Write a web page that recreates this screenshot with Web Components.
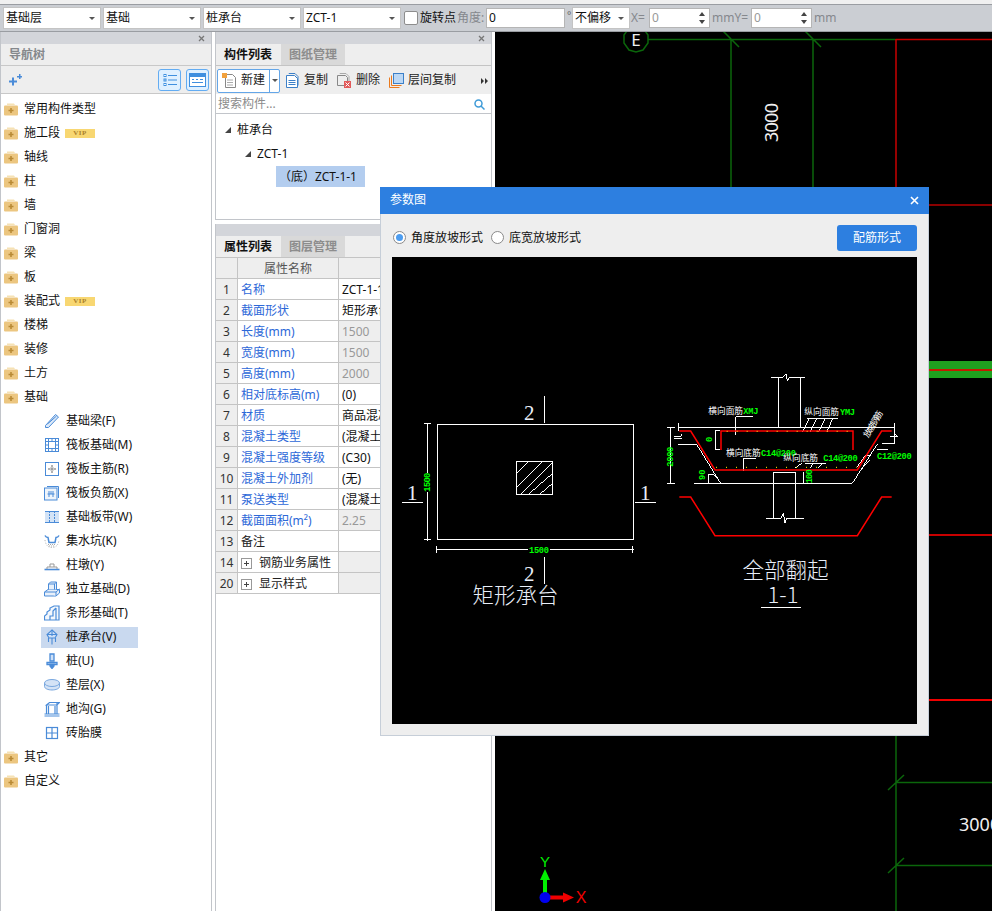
<!DOCTYPE html>
<html lang="zh">
<head>
<meta charset="utf-8">
<title>参数图</title>
<style>
html, body { margin: 0; height: 100%; overflow: hidden; background: #fff; }
body { font: 12px/1.2 "Noto Sans", "Noto Sans CJK SC", sans-serif; color: #111; display: flex; flex-direction: column; }
</style>
</head>
<body>
<top-bar>
  <tool-combo>基础层</tool-combo><tool-combo>基础</tool-combo><tool-combo>桩承台</tool-combo><tool-combo>ZCT-1</tool-combo>
</top-bar>
<work-area>
  <nav-panel>
    <tree-row icon="folder">常用构件类型</tree-row>
    <tree-row icon="folder" vip>施工段</tree-row>
    <tree-row icon="folder">轴线</tree-row>
    <tree-row icon="folder">柱</tree-row>
    <tree-row icon="folder">墙</tree-row>
    <tree-row icon="folder">门窗洞</tree-row>
    <tree-row icon="folder">梁</tree-row>
    <tree-row icon="folder">板</tree-row>
    <tree-row icon="folder" vip>装配式</tree-row>
    <tree-row icon="folder">楼梯</tree-row>
    <tree-row icon="folder">装修</tree-row>
    <tree-row icon="folder">土方</tree-row>
    <tree-row icon="folder">基础</tree-row>
    <tree-row child icon="beam">基础梁(F)</tree-row>
    <tree-row child icon="raft">筏板基础(M)</tree-row>
    <tree-row child icon="rebar">筏板主筋(R)</tree-row>
    <tree-row child icon="negbar">筏板负筋(X)</tree-row>
    <tree-row child icon="strip">基础板带(W)</tree-row>
    <tree-row child icon="pit">集水坑(K)</tree-row>
    <tree-row child icon="pier">柱墩(Y)</tree-row>
    <tree-row child icon="footing">独立基础(D)</tree-row>
    <tree-row child icon="stepped">条形基础(T)</tree-row>
    <tree-row child icon="cap" selected>桩承台(V)</tree-row>
    <tree-row child icon="pile">桩(U)</tree-row>
    <tree-row child icon="disc">垫层(X)</tree-row>
    <tree-row child icon="trench">地沟(G)</tree-row>
    <tree-row child icon="brick">砖胎膜</tree-row>
    <tree-row icon="folder">其它</tree-row>
    <tree-row icon="folder">自定义</tree-row>
  </nav-panel>
  <middle-panel>
    <prop-row n="1" name="名称" value="ZCT-1-1"></prop-row>
    <prop-row n="2" name="截面形状" value="矩形承台"></prop-row>
    <prop-row n="3" name="长度(mm)" value="1500" locked></prop-row>
    <prop-row n="4" name="宽度(mm)" value="1500" locked></prop-row>
    <prop-row n="5" name="高度(mm)" value="2000" locked></prop-row>
    <prop-row n="6" name="相对底标高(m)" value="(0)"></prop-row>
    <prop-row n="7" name="材质" value="商品混凝土"></prop-row>
    <prop-row n="8" name="混凝土类型" value="(混凝土)"></prop-row>
    <prop-row n="9" name="混凝土强度等级" value="(C30)"></prop-row>
    <prop-row n="10" name="混凝土外加剂" value="(无)"></prop-row>
    <prop-row n="11" name="泵送类型" value="(混凝土泵)"></prop-row>
    <prop-row n="12" name="截面面积(m²)" value="2.25" locked></prop-row>
    <prop-row n="13" name="备注" value="" plain></prop-row>
    <prop-row n="14" name="钢筋业务属性" value="" plain group></prop-row>
    <prop-row n="20" name="显示样式" value="" plain group></prop-row>
  </middle-panel>
  <cad-canvas></cad-canvas>
</work-area>
<param-dialog></param-dialog>

<script>
const BLUE = '#4a8bd8';

// 树上和工具栏的小图标
const ICONS = {
  folder: `<svg width="14" height="14" viewBox="0 0 14 14"><path d="M3 1.5h7l1 1.5H3z" fill="#f6e2b4"/><path d="M0 4.5q0-1 1-1h12q1 0 1 1v8q0 1-1 1H1q-1 0-1-1z" fill="#ecc680"/><path d="M7 6v5M4.5 8.5h5" stroke="#b98a35" stroke-width="1.6"/></svg>`,
  beam: `<svg width="16" height="16" viewBox="0 0 16 16" fill="#dce9f8" stroke="${BLUE}"><path d="M1.5 12.5 11.5 1.5 14.5 4 4.5 14.5H1.5z"/><path d="M3.5 11 12.5 3" fill="none"/></svg>`,
  raft: `<svg width="16" height="16" viewBox="0 0 16 16" fill="none" stroke="${BLUE}"><rect x="1.5" y="1.5" width="13" height="13"/><rect x="4.5" y="4.5" width="7" height="7"/><path d="M1.5 4.5h3M11.5 4.5h3M1.5 11.5h3M11.5 11.5h3M4.5 1.5v3M11.5 1.5v3M4.5 11.5v3M11.5 11.5v3M1.5 8h3M11.5 8h3M8 1.5v3M8 11.5v3"/></svg>`,
  rebar: `<svg width="16" height="16" viewBox="0 0 16 16" fill="none"><rect x="1.5" y="1.5" width="13" height="13" stroke="${BLUE}"/><path d="M8 4v8M4 8h8" stroke="#999" stroke-width="1.5"/><path d="M6.5 6.5h3v3h-3z" stroke="#ccc"/></svg>`,
  negbar: `<svg width="16" height="16" viewBox="0 0 16 16" fill="none" stroke="${BLUE}"><path d="M3 1.5h11.5V13"/><rect x="0.5" y="3" width="12.5" height="12" fill="#eef4fb"/><path d="M5 6v6M9 6v6M3.5 9h7M7 6v3" stroke-width="1"/></svg>`,
  strip: `<svg width="16" height="16" viewBox="0 0 16 16" fill="#d3e3f6"><rect x="1" y="2" width="14" height="12"/><path d="M1 2.5h14M1 13.5h14" stroke="${BLUE}"/><path d="M5.5 2v12M10.5 2v12" stroke="${BLUE}" stroke-dasharray="2 1"/></svg>`,
  pit: `<svg width="16" height="16" viewBox="0 0 16 16" fill="none"><path d="M1 2.500q1 2 3 2l1 5h6l1-5q2 0 3-2" stroke="${BLUE}" stroke-width="1.500"/><path d="M1 7q1 7.500 7 7.500T15 7" stroke="#aaa" stroke-dasharray="1 1.500"/><path d="M4 11.500h8M5 13h6" stroke="#aaa" stroke-dasharray="1 1"/></svg>`,
  pier: `<svg width="16" height="16" viewBox="0 0 16 16" fill="none" stroke="${BLUE}"><path d="M.5 12.5h15" stroke-width="1.6"/><path d="M3 12V10h10v2" stroke="#999"/><path d="M6 10V7h4v3" stroke="#999"/></svg>`,
  footing: `<svg width="16" height="16" viewBox="0 0 16 16" fill="#e8f0fa" stroke="${BLUE}"><path d="M.5 11 4 8.500h11.500v3.500L12 15H.5z"/><path d="M.5 11H12v4M12 11l3.500-3"/><path d="M4.500 8.500V3l2-2h6v7.500M4.500 3h6v5.500M10.500 3l2-2"/></svg>`,
  stepped: `<svg width="16" height="16" viewBox="0 0 16 16" fill="#f3f7fc" stroke="${BLUE}" stroke-width="1.200"><path d="M.500 15V11L3 9V7L6 5V3l4-2h5v14z"/><path d="M6 15V11h3V6l3-3M12 3v12"/></svg>`,
  cap: `<svg width="16" height="16" viewBox="0 0 16 16" fill="#cfe0f6" stroke="${BLUE}" stroke-width="1.100"><path d="M8 1 13 5.500 11 9H5L3 5.500z"/><path d="M3 5.500h10M8 1v6" /><path d="M4.500 9v4M8 9v6.500M11.500 9v4" fill="none"/></svg>`,
  pile: `<svg width="16" height="16" viewBox="0 0 16 16" fill="#cfe0f6" stroke="${BLUE}" stroke-width="1.300"><path d="M6 1h4v7H6z"/><path d="M3 9.500h10v2H3z"/><path d="M6 11.500h4V13l-2 2.500L6 13z" fill="${BLUE}"/></svg>`,
  disc: `<svg width="16" height="16" viewBox="0 0 16 16" fill="#d4e3f6" stroke="#7aa8df"><path d="M.500 6v3.500C.500 11.500 4 13 8 13s7.500-1.500 7.500-3.500V6"/><ellipse cx="8" cy="6" rx="7.500" ry="3.500"/></svg>`,
  trench: `<svg width="16" height="16" viewBox="0 0 16 16" fill="none" stroke="${BLUE}" stroke-width="1.200"><path d="M.500 15h15M.500 13h15"/><path d="M2.500 13V4M13 13V2M2.500 4l3-2.500H15.500L13 4zM2.500 4H13M4.500 13V5M11 13V5"/></svg>`,
  brick: `<svg width="16" height="16" viewBox="0 0 16 16" fill="none" stroke="${BLUE}" stroke-width="1.200"><rect x="2.500" y="2.500" width="11" height="11"/><path d="M8 2.500v11M2.500 8h11"/></svg>`
};

class TopBar extends HTMLElement {
  constructor() {
    super();
    this.attachShadow({ mode: 'open' }).innerHTML = `
      <style>
        :host { display: block; flex: none; background: #f0f0f0; padding-top: 4px; }
        .bar { display: flex; align-items: center; gap: 2px; padding-left: 3px;
               background: #cbced3; border-top: 1px solid #9a9da2; border-bottom: 1px solid #9a9da2; height: 26px; }
        .check { width: 12px; height: 12px; border: 1px solid #8d8d8d; border-radius: 2px; background: #fff; margin-left: 1px; }
        .label { white-space: nowrap; }
        .dim { color: #85888d; white-space: nowrap; }
        .input { height: 20px; box-sizing: border-box; background: #fff; border: 1px solid #b5b5b5; display: flex; align-items: center; padding-left: 2px; }
        .deg { color: #666; font-size: 10px; width: 1px; margin-top: -6px; margin-right: 2px; }
        .spin { position: relative; color: #999; width: 61px; }
        .spin::before, .spin::after { content: ""; position: absolute; right: 4px; border: 3px solid transparent; border-top: 0; border-bottom: 4px solid #444; }
        .spin::before { top: 3px; }
        .spin::after { bottom: 3px; transform: scaleY(-1); }
      </style>
      <div class="bar">
        <slot></slot>
        <span class="check"></span>
        <span class="label">旋转点</span>
        <span class="dim" style="margin-left:-1px;width:27px">角度:</span>
        <span class="input" style="width:79px">0</span>
        <span class="deg">°</span>
        <tool-combo style="width:58px">不偏移</tool-combo>
        <span class="dim" style="margin-left:-1px;width:16px">X=</span>
        <span class="input spin">0</span>
        <span class="dim" style="width:36px">mmY=</span>
        <span class="input spin" style="margin-left:1px">0</span>
        <span class="dim">mm</span>
      </div>`;
  }
}

class ToolCombo extends HTMLElement {
  constructor() {
    super();
    this.attachShadow({ mode: 'open' }).innerHTML = `
      <style>
        :host { display: block; width: 98px; height: 22px; box-sizing: border-box; flex: none; background: #fff; border: 1px solid #c4c4c4; }
        div { display: flex; align-items: center; justify-content: space-between; height: 100%; padding: 0 5px 0 2px; color: #111; }
        i { border: 3px solid transparent; border-top: 3px solid #555; border-bottom: 0; }
      </style>
      <div><slot></slot><i></i></div>`;
  }
}

class WorkArea extends HTMLElement {
  constructor() {
    super();
    this.attachShadow({ mode: 'open' }).innerHTML = `
      <style>
        :host { display: flex; flex: 1; min-height: 0; background: #fff; gap: 3px; }
      </style>
      <slot></slot>`;
  }
}

// 面板顶部的灰条,带关闭叉
class PanelStrip extends HTMLElement {
  constructor() {
    super();
    this.attachShadow({ mode: 'open' }).innerHTML = `
      <style>
        :host { display: flex; justify-content: flex-end; align-items: center; height: 12px; background: #d3d5da; padding-right: 6px; flex: none; }
      </style>
      <svg width="7" height="7" viewBox="0 0 7 7"><path d="M1 1l5 5M6 1 1 6" stroke="#777" stroke-width="1.300"/></svg>`;
  }
}

class NavPanel extends HTMLElement {
  constructor() {
    super();
    this.attachShadow({ mode: 'open' }).innerHTML = `
      <style>
        :host { display: flex; flex-direction: column; width: 212px; flex: none; box-sizing: border-box; border-left: 1px solid #c2c5ca; border-right: 1px solid #c2c5ca; }
        .title { height: 22px; padding: 2px 0 0 8px; display: flex; align-items: center; background: #eee; color: #85888c; font-weight: 700; border-bottom: 1px solid #c8c8c8; box-sizing: border-box; flex: none; }
        .tools { height: 28px; background: #eee; border-bottom: 1px solid #c8c8c8; box-sizing: border-box; display: flex; align-items: center; padding: 0 2px 0 7px; gap: 5px; flex: none; }
        .tools svg.plus { margin-right: auto; }
        .btn { width: 23px; height: 22px; box-sizing: border-box; border: 1px solid #63acf2; border-radius: 3px; background: #dff0ff; display: flex; align-items: center; justify-content: center; }
        .rows { padding-top: 3px; flex: 1; }
      </style>
      <panel-strip></panel-strip>
      <div class="title">导航树</div>
      <div class="tools">
        <svg class="plus" width="14" height="12" viewBox="0 0 14 12" fill="${BLUE}"><path d="M1 6.500h3v-3h2v3h3v2H6v3H4v-3H1z"/><path d="M9 2h2V0h1.500v2H14v1.500h-1.500V5H11V3.500H9z"/></svg>
        <span class="btn"><svg width="14" height="14" viewBox="0 0 14 14" fill="none" stroke="#3f8fdf"><rect x="1" y="1.500" width="2" height="2"/><rect x="1" y="6" width="2" height="2"/><rect x="1" y="10.500" width="2" height="2"/><path d="M5 2.500h9M5 7h9M5 11.500h9"/></svg></span>
        <span class="btn"><svg width="17" height="14" viewBox="0 0 17 14"><rect x=".5" y=".5" width="16" height="13" fill="#fff" stroke="#3f8fdf"/><rect x="1" y="1" width="15" height="3" fill="#3f8fdf"/><path d="M3 6.500h2M7 6.500h2M11 6.500h3M3 9.500h11" stroke="#3f8fdf"/></svg></span>
      </div>
      <div class="rows"><slot></slot></div>`;
  }
}

class TreeRow extends HTMLElement {
  connectedCallback() {
    const child = this.hasAttribute('child');
    const selected = this.hasAttribute('selected');
    this.attachShadow({ mode: 'open' }).innerHTML = `
      <style>
        :host { display: block; height: 24px; }
        .row { display: flex; align-items: center; height: 100%; gap: 6px; padding-left: ${child ? 43 : 3}px; }
        .cell { display: flex; align-items: center; gap: 6px; height: 21px; width: 97px; padding-left: 3px; margin-left: -3px; box-sizing: border-box; white-space: nowrap; flex: none; ${selected ? 'background: #c9d9ef;' : ''} }
        .ic { display: flex; }
        .vip { margin-left: -1px; width: 30px; height: 9px; background: #f8d772; color: #a9802a; font: bold 7px/9px "Liberation Serif", serif; text-align: center; letter-spacing: .5px; }
      </style>
      <div class="row">
        ${child ? `<div class="cell"><span class="ic">${ICONS[this.getAttribute('icon')]}</span><span><slot></slot></span></div>`
                : `<span class="ic">${ICONS[this.getAttribute('icon')]}</span><span><slot></slot></span>`}
        ${this.hasAttribute('vip') ? '<span class="vip">VIP</span>' : ''}
      </div>`;
  }
}

class PanelTabs extends HTMLElement {
  connectedCallback() {
    const names = this.getAttribute('names').split(',');
    this.attachShadow({ mode: 'open' }).innerHTML = `
      <style>
        :host { display: flex; flex: none; height: 22px; background: #eee; border-bottom: 1px solid #c4c4c4; box-sizing: border-box; }
        span { width: 64px; margin-right: 1px; padding-top: 2px; box-sizing: border-box; display: flex; align-items: center; justify-content: center; font-weight: 700; }
        .off { background: #d9d9d9; color: #8d8d8d; }
      </style>
      ${names.map((n, i) => `<span class="${i ? 'off' : ''}">${n}</span>`).join('')}`;
  }
}

class MiddlePanel extends HTMLElement {
  constructor() {
    super();
    this.attachShadow({ mode: 'open' }).innerHTML = `
      <style>
        :host { display: flex; flex-direction: column; width: 277px; flex: none; box-sizing: border-box; }
        .top, .bottom { border-left: 1px solid #c2c5ca; border-right: 1px solid #c2c5ca; display: flex; flex-direction: column; }
        .top { height: 188px; border-bottom: 1px solid #c2c5ca; box-sizing: border-box; }
        .bottom { flex: 1; margin-top: 4px; }
        .tools { height: 28px; box-sizing: border-box; background: #eee; display: flex; align-items: center; padding: 1px 0 0 1px; flex: none; color: #222; }
        .new { display: flex; height: 24px; box-sizing: border-box; border: 1px solid #64a6e8; border-radius: 2px; background: #fff; align-items: center; margin-right: 6px; }
        .new b { font-weight: 400; display: flex; align-items: center; gap: 5px; padding-left: 4px; width: 52px; box-sizing: border-box; border-right: 1px solid #64a6e8; height: 100%; white-space: nowrap; }
        .new i { width: 9px; display: flex; justify-content: center; }
        .new i::after { content: ""; border: 3px solid transparent; border-top: 3px solid #555; border-bottom: 0; }
        .tool { display: flex; align-items: center; gap: 4px; margin-right: 9px; white-space: nowrap; }
        .more { margin-left: 16px; display: flex; }
        .search { height: 20px; box-sizing: border-box; display: flex; align-items: center; justify-content: space-between; padding: 2px 6px 0 2px; color: #8b8b8b; background: #fff; border-bottom: 1px solid #c2c5ca; flex: none; }
        .tree { flex: 1; padding-top: 4px; }
        .node { height: 24px; display: flex; align-items: center; gap: 6px; white-space: nowrap; }
        .arrow { width: 0; height: 0; border-left: 6px solid transparent; border-bottom: 6px solid #444; }
        .pick { height: 21px; width: 89px; margin-left: 60px; display: flex; align-items: center; background: #b3cdef; white-space: nowrap; padding: 2px 0 0 3px; box-sizing: border-box; }
        .head { display: grid; grid-template-columns: 22px 101px 1fr; height: 21px; background: #eee; flex: none; }
        .head span { border-right: 1px solid #c4c4c4; border-bottom: 1px solid #c4c4c4; padding-top: 2px; display: flex; align-items: center; justify-content: center; color: #555; }
      </style>
      <div class="top">
        <panel-strip></panel-strip>
        <panel-tabs names="构件列表,图纸管理"></panel-tabs>
        <div class="tools">
          <span class="new"><b>
            <svg width="14" height="15" viewBox="0 0 14 15" fill="none"><path d="M3.500 1.500h7l3 3v10h-10z" stroke="#888"/><path d="M5 7h6M5 9.500h6M5 12h6" stroke="#aaa"/><rect x="0" y="0" width="5" height="5" fill="#f2a13c"/></svg>新建</b><i></i></span>
          <span class="tool"><svg width="14" height="15" viewBox="0 0 14 15" fill="none" stroke="#3c80c8"><path d="M.500 2.500h8l3 3v9h-11z" fill="#fff"/><path d="M3 1v-.500h6l3 3v9"/><path d="M2.500 7.500h7M2.500 9.500h7M2.500 11.500h7"/></svg>复制</span>
          <span class="tool"><svg width="15" height="15" viewBox="0 0 15 15" fill="none"><path d="M.500 2.500h8l2 2v8h-10z" stroke="#888"/><path d="M3 1V.500h6l3 3V8" stroke="#aaa"/><rect x="7" y="8" width="7" height="7" fill="#e25a5a"/><path d="M8.500 9.500l4 4M12.500 9.500l-4 4" stroke="#fff"/></svg>删除</span>
          <span class="tool"><svg width="15" height="15" viewBox="0 0 15 15" fill="none"><path d="M.500 14.500v-10M.500 14.500h10M2.500 12.500v-10M2.500 12.500h10" stroke="#ea7a1e"/><rect x="4.500" y=".500" width="10" height="10" fill="#bcd8f5" stroke="#3c80c8"/></svg>层间复制</span>
          <span class="more"><svg width="7" height="6" viewBox="0 0 7 6" fill="#333"><path d="M0 0l3 3-3 3zM4 0l3 3-3 3z"/></svg></span>
        </div>
        <div class="search">搜索构件...
          <svg width="11" height="11" viewBox="0 0 11 11" fill="none" stroke="#3f9bd8" stroke-width="1.500"><circle cx="4.500" cy="4.500" r="3.500"/><path d="M7 7l3.500 3.500"/></svg>
        </div>
        <div class="tree">
          <div class="node" style="padding-left:9px"><span class="arrow"></span>桩承台</div>
          <div class="node" style="padding-left:29px"><span class="arrow"></span>ZCT-1</div>
          <div class="pick">（底）ZCT-1-1</div>
        </div>
      </div>
      <div class="bottom">
        <panel-strip></panel-strip>
        <panel-tabs names="属性列表,图层管理"></panel-tabs>
        <div class="head"><span></span><span>属性名称</span><span>属性值</span></div>
        <slot></slot>
      </div>`;
  }
}

class PropRow extends HTMLElement {
  connectedCallback() {
    const locked = this.hasAttribute('locked');
    const plain = this.hasAttribute('plain');
    const group = this.hasAttribute('group');
    this.attachShadow({ mode: 'open' }).innerHTML = `
      <style>
        :host { display: grid; grid-template-columns: 22px 101px 1fr; height: 21px; }
        span { border-right: 1px solid #c4c4c4; border-bottom: 1px solid #c4c4c4; display: flex; align-items: center; white-space: nowrap; overflow: hidden; padding: 2px 0 0 3px; box-sizing: border-box; }
        .n { background: #eee; justify-content: center; padding: 2px 0 0; color: #333; }
        .name { color: ${plain ? '#222' : '#2d68d8'}; gap: 7px; }
        .val { background: ${locked || group ? '#eee' : '#fff'}; color: ${locked ? '#999' : '#111'}; }
        i { width: 9px; height: 9px; border: 1px solid #999; flex: none; position: relative; background: #fff; }
        i::before { content: ""; position: absolute; left: 2px; right: 2px; top: 4px; height: 1px; background: #444; }
        i::after { content: ""; position: absolute; top: 2px; bottom: 2px; left: 4px; width: 1px; background: #444; }
      </style>
      <span class="n">${this.getAttribute('n')}</span>
      <span class="name">${group ? '<i></i>' : ''}${this.getAttribute('name')}</span>
      <span class="val">${this.getAttribute('value')}</span>`;
  }
}

// 绘图区:轴网本身就是自由画布,按坐标画
class CadCanvas extends HTMLElement {
  constructor() {
    super();
    this.attachShadow({ mode: 'open' }).innerHTML = `
      <style>
        :host { display: block; flex: 1; background: #000; position: relative; overflow: hidden; }
        svg { position: absolute; left: 0; top: 0; display: block; }
        text { font-family: "Noto Sans", sans-serif; fill: #f0f0f0; }
      </style>
      <svg width="497" height="879" viewBox="495 32 497 879" fill="none">
        <g stroke="#0b660b" stroke-width="1.500">
          <polygon points="629,28 643,28 648,35 648,43 643,50 636,52 629,50 624,43 624,35"/>
          <path d="M648 39.500H896M731 39V187M813 39V187M723 31l16 16M805 31l16 16"/>
          <path d="M896 736V911M896 782.500H992M896 865.500H992M888 790l16-15M888 873l16-15"/>
        </g>
        <path d="M896 39.500H992M896 39V187" stroke="#c80000" stroke-width="1.500"/>
        <path d="M929 205H992" stroke="#8a0000" stroke-width="2"/>
        <rect x="929" y="361" width="63" height="17" fill="#1fa01f"/>
        <path d="M929 370H992" stroke="#c41a00" stroke-width="2"/>
        <path d="M929 535H992" stroke="#c80000" stroke-width="2"/>
        <path d="M929 700H992" stroke="#f00000" stroke-width="2"/>
        <text x="636" y="46" font-size="17" text-anchor="middle">E</text>
        <text transform="translate(778 142) rotate(-90)" font-size="18" textLength="39">3000</text>
        <text x="959" y="831" font-size="18">3000</text>
        <path d="M545 896V880" stroke="#00f000" stroke-width="4"/>
        <path d="M545 869l5 11h-10z" fill="#00f000"/>
        <path d="M548 897.500H563" stroke="#f00000" stroke-width="4"/>
        <path d="M574 897.500l-11-5v10z" fill="#f00000"/>
        <circle cx="545" cy="897.500" r="5.500" fill="#0000f0"/>
        <text x="545" y="867" font-size="15" text-anchor="middle" style="fill:#00f000;font-family:'Liberation Sans',sans-serif">Y</text>
        <text x="581" y="903" font-size="16" text-anchor="middle" style="fill:#f00000;font-family:'Liberation Sans',sans-serif">X</text>
      </svg>`;
  }
}

class RadioOption extends HTMLElement {
  constructor() {
    super();
    this.attachShadow({ mode: 'open' }).innerHTML = `
      <style>
        :host { display: inline-flex; align-items: center; gap: 5px; }
        i { width: 13px; height: 13px; box-sizing: border-box; border: 1px solid #8a8a8a; border-radius: 50%; background: #fff; display: flex; align-items: center; justify-content: center; }
        :host([checked]) i::after { content: ""; width: 7px; height: 7px; border-radius: 50%; background: #4d9df0; }
      </style>
      <i></i><slot></slot>`;
  }
}

class ParamDialog extends HTMLElement {
  constructor() {
    super();
    this.attachShadow({ mode: 'open' }).innerHTML = `
      <style>
        :host { position: absolute; left: 380px; top: 187px; width: 549px; height: 549px; box-sizing: border-box; display: flex; flex-direction: column; background: #eee; border: 1px solid #c6ced8; border-top: 0; }
        .title { height: 27px; margin: 0 -1px; background: #2d7fe0; color: #fff; display: flex; align-items: center; justify-content: space-between; padding: 0 10px; flex: none; }
        .body { flex: 1; display: flex; flex-direction: column; padding: 11px 11px 11px; min-height: 0; }
        .opts { display: flex; align-items: center; height: 26px; gap: 8px; flex: none; padding-left: 1px; }
        .btn { margin-left: auto; width: 80px; height: 26px; background: #2d7fe0; border-radius: 3px; color: #fff; display: flex; align-items: center; justify-content: center; }
        pile-drawing { margin-top: 6px; flex: 1; }
      </style>
      <div class="title">参数图
        <svg width="9" height="9" viewBox="0 0 9 9"><path d="M1 1l7 7M8 1 1 8" stroke="#fff" stroke-width="1.600"/></svg>
      </div>
      <div class="body">
        <div class="opts">
          <radio-option checked>角度放坡形式</radio-option>
          <radio-option>底宽放坡形式</radio-option>
          <span class="btn">配筋形式</span>
        </div>
        <pile-drawing></pile-drawing>
      </div>`;
  }
}

// 参数图的 CAD 线稿,两个分组直接用放大三倍后量到的坐标
class PileDrawing extends HTMLElement {
  constructor() {
    super();
    this.attachShadow({ mode: 'open' }).innerHTML = `
      <style>
        :host { display: block; background: #000; overflow: hidden; }
        svg { display: block; }
        .w { stroke: #fff; stroke-width: 3; fill: none; shape-rendering: crispEdges; }
        .r { stroke: #f00; stroke-width: 4.500; fill: none; }
        .t { fill: #e8eef8; font-family: "Noto Sans CJK SC", sans-serif; font-weight: 300; }
        .s { fill: #e8eef8; font-family: "Liberation Serif", serif; }
        .c { fill: #fff; font: 26px "Noto Sans CJK SC", sans-serif; }
        .g { fill: #0f0; font: bold 26px "Liberation Mono", monospace; }
        .d { stroke: #ff0; stroke-width: 3; stroke-dasharray: 3 27; fill: none; }
      </style>
      <svg width="525" height="467" viewBox="392 257 525 467">
        <g transform="translate(395 390) scale(.33333)">
          <rect class="w" x="127" y="105" width="589" height="343"/>
          <rect class="w" x="364" y="216" width="109" height="97"/>
          <path class="w" stroke-width="2" d="M364 250 398 216M364 292 440 216M376 313 473 216M400 313 473 250M434 313 473 280"/>
          <path class="w" d="M448 18V98M448 500V582M22 337H84M720 337H782"/>
          <path class="w" d="M97 102V248M97 305V452M87 102H108M87 448H108M127 478H398M465 478H718M125 468V488M714 468V488"/>
          <text class="g" transform="translate(105 305) rotate(-90)" textLength="57">1500</text>
          <text class="g" x="402" y="488" textLength="60">1500</text>
          <text class="s" x="403" y="90" font-size="63" text-anchor="middle">2</text>
          <text class="s" x="403" y="572" font-size="63" text-anchor="middle">2</text>
          <text class="s" x="52" y="330" font-size="63" text-anchor="middle">1</text>
          <text class="s" x="751" y="330" font-size="63" text-anchor="middle">1</text>
        </g>
        <g transform="translate(650 370) scale(.33333)">
          <path class="w" d="M363 22H400L408 12 412 32 418 22H465M386 22V172M451 22V172"/>
          <path class="w" d="M85 172H735M85 160V184M733 160V222M52 172H75M52 340H75M62 172V340M132 340H607"/>
          <path class="w" d="M85 223H140L212 340M72 200H92L96 192M72 206H96M175 312V340M175 312Q195 312 200 325"/>
          <path class="w" d="M607 340 682 222M682 240H715M695 222H735M720 200H742L735 192M195 182H210M195 240H210M198 182V240"/>
          <path class="w" d="M258 195V140H308M470 146H565M458 185 478 146M480 187 500 146M505 187 525 146M530 187 548 146"/>
          <path class="w" d="M280 303V265H318M465 280H528M435 295 455 280M480 295 490 280M502 295 517 280"/>
          <path class="w" d="M370 445V307H436V445M348 445H393L400 430 405 458 410 445H462M460 307V340"/>
          <path class="w" d="M622 290 645 258H660M632 300 660 270"/>
          <path class="r" d="M88 183H122L195 300H622L695 183H725"/>
          <path class="r" d="M213 240V183H609V240"/>
          <path class="r" d="M88 381H122L195 497H622L695 381H725"/>
          <path class="d" d="M230 184H600M198 292H620"/>
          <text class="c" x="175" y="132">横向面筋</text><text class="g" x="280" y="132" textLength="45">XMJ</text>
          <text class="c" x="463" y="135">纵向面筋</text><text class="g" x="570" y="135" textLength="45">YMJ</text>
          <text class="c" x="228" y="259">横向底筋</text><text class="g" x="333" y="258" textLength="105">C14@200</text>
          <text class="c" x="400" y="274">纵向底筋</text><text class="g" x="520" y="273" textLength="103">C14@200</text>
          <text class="g" x="681" y="267" textLength="104">C12@200</text>
          <text class="c" transform="translate(655 205) rotate(-60)" textLength="88">放坡钢筋</text>
          <text class="g" transform="translate(70 290) rotate(-90)" textLength="60">2000</text>
          <text class="g" transform="translate(185 216) rotate(-90)">0</text>
          <text class="g" transform="translate(165 330) rotate(-90)">90</text>
          <text class="g" transform="translate(486 340) rotate(-90)" textLength="42">100</text>
        </g>
        <text class="t" x="515.500" y="603" font-size="21.500" text-anchor="middle">矩形承台</text>
        <text class="t" x="785.500" y="578" font-size="21.500" text-anchor="middle">全部翻起</text>
        <text class="t" x="783" y="603" font-size="22" text-anchor="middle">1-1</text>
        <path d="M761 607.500H801" stroke="#fff"/>
      </svg>`;
  }
}

customElements.define('top-bar', TopBar);
customElements.define('tool-combo', ToolCombo);
customElements.define('work-area', WorkArea);
customElements.define('panel-strip', PanelStrip);
customElements.define('nav-panel', NavPanel);
customElements.define('tree-row', TreeRow);
customElements.define('panel-tabs', PanelTabs);
customElements.define('middle-panel', MiddlePanel);
customElements.define('prop-row', PropRow);
customElements.define('cad-canvas', CadCanvas);
customElements.define('radio-option', RadioOption);
customElements.define('param-dialog', ParamDialog);
customElements.define('pile-drawing', PileDrawing);
</script>
</body>
</html>
